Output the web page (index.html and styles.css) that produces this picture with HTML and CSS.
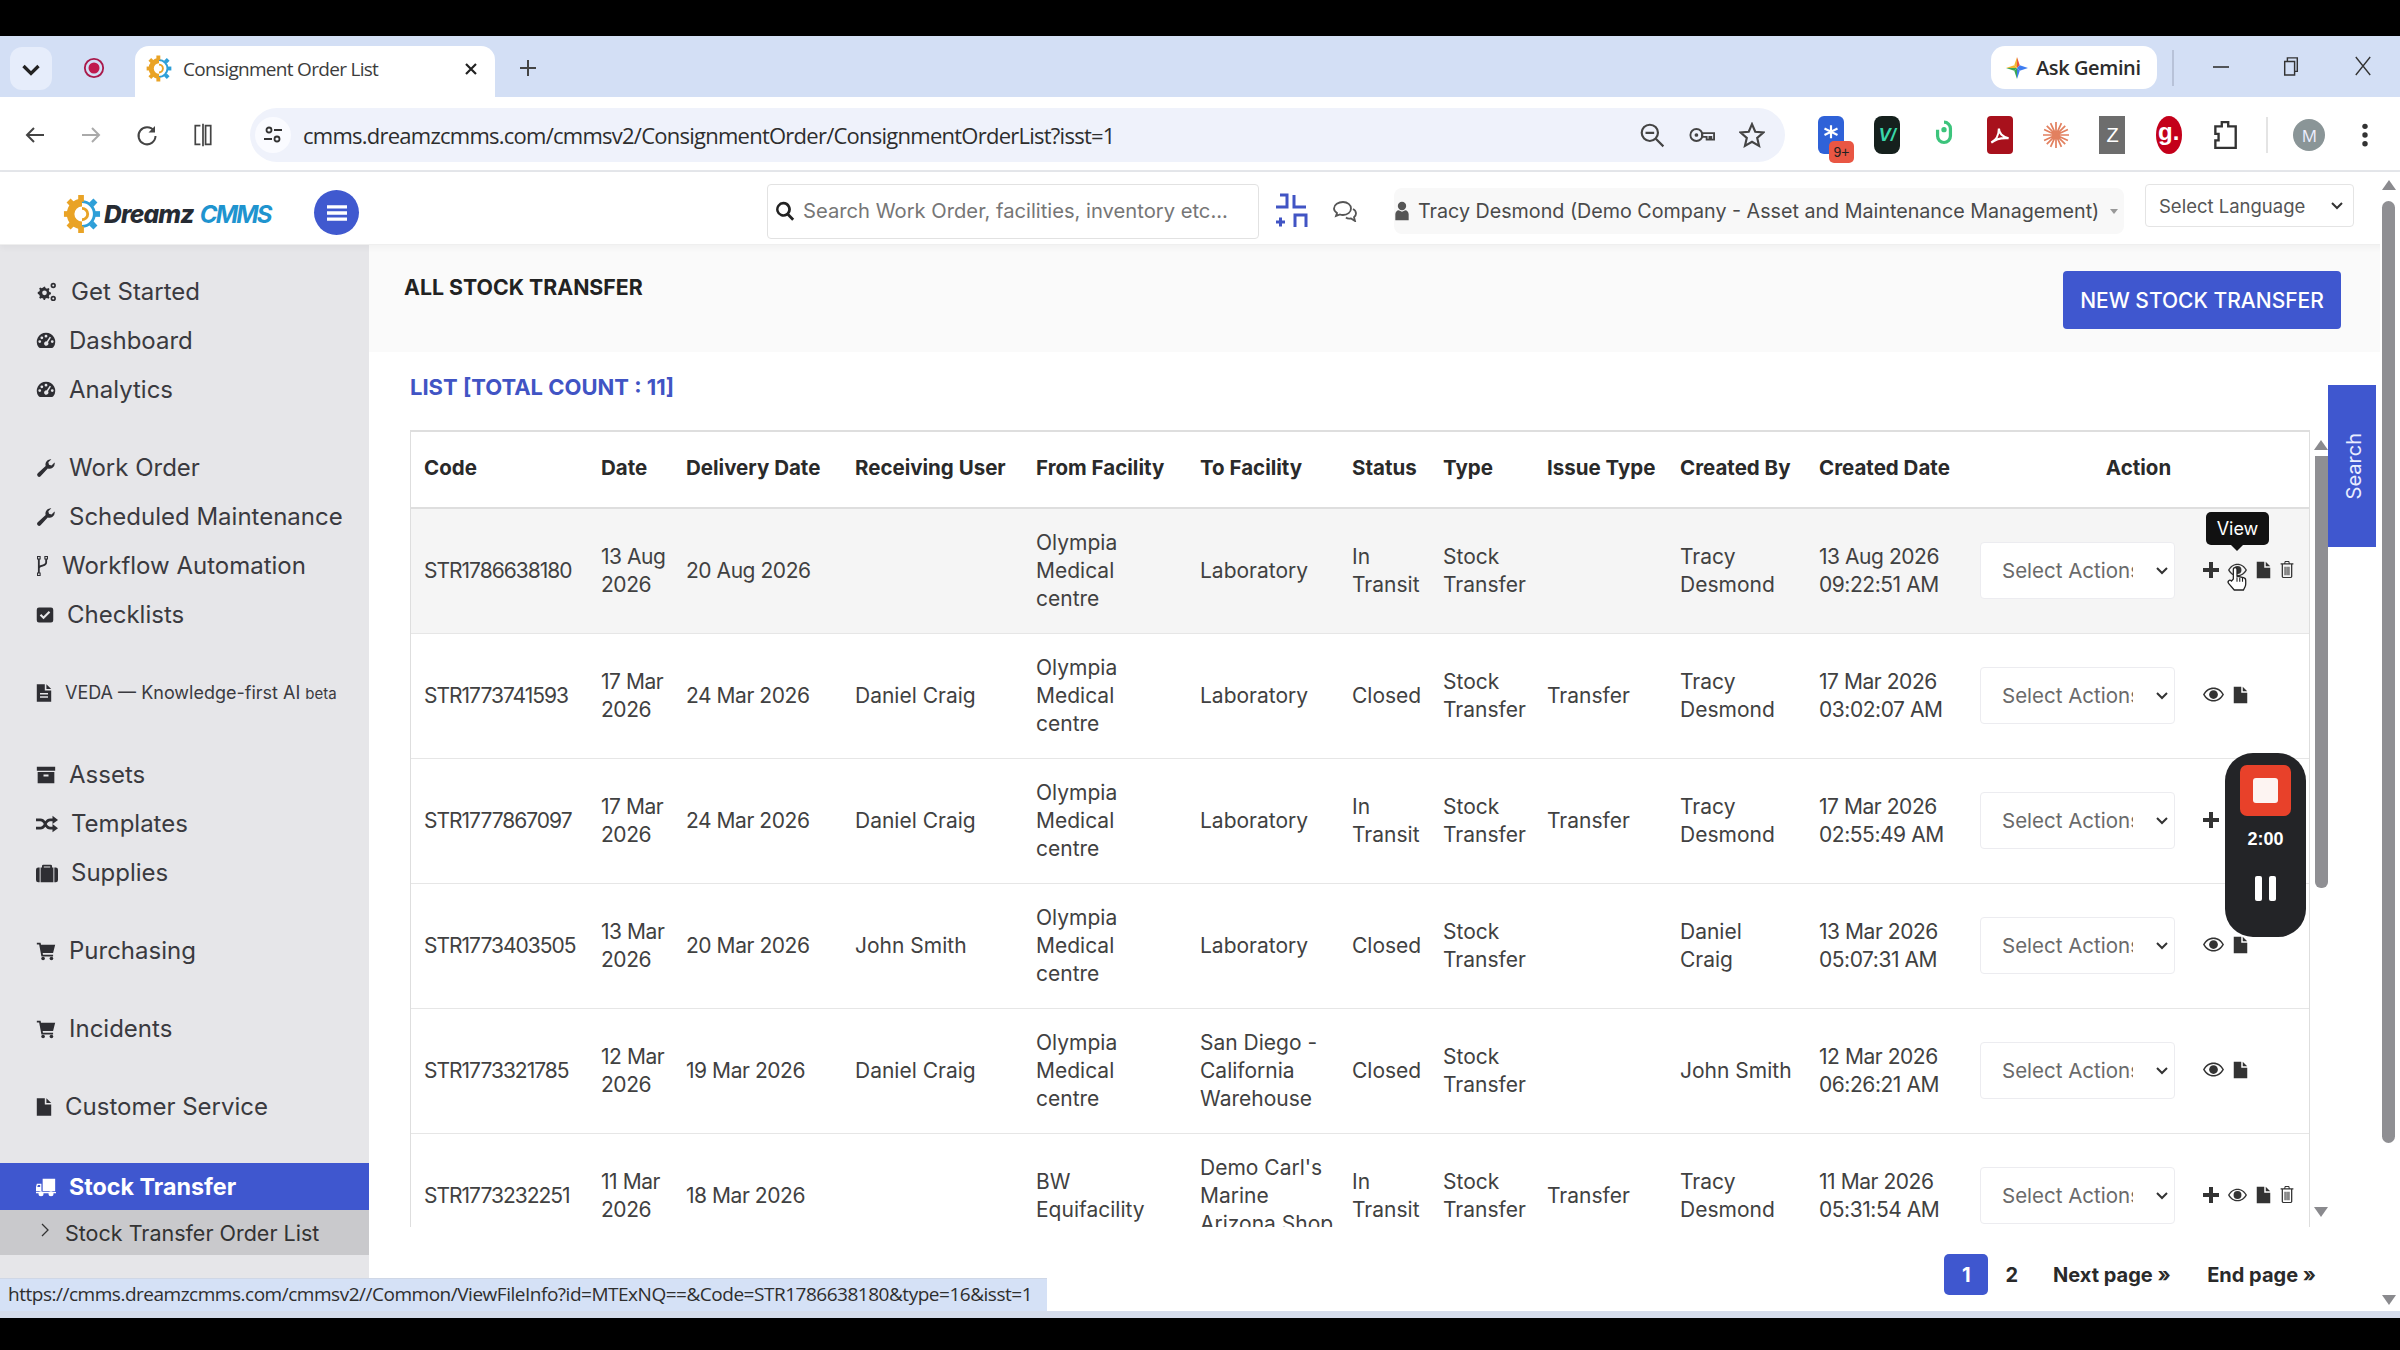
FILE: index.html
```html
<!DOCTYPE html>
<html lang="en">
<head>
<meta charset="utf-8">
<title>Consignment Order List</title>
<link rel="stylesheet" href="styles.css">
</head>
<body>
<svg class="defs" aria-hidden="true">
  <symbol id="i-gear" viewBox="0 0 40 40">
    <path d="M20 8a12 12 0 0 0 0 24" fill="none" stroke="#e9a326" stroke-width="8"/>
    <path d="M20 7a13 13 0 0 1 0 26" fill="none" stroke="#2e9fd8" stroke-width="3"/>
    <g fill="#e9a326"><rect x="16" y="0" width="6" height="7"/><rect x="16" y="33" width="6" height="7"/><rect x="1" y="17" width="6" height="6"/><rect x="5" y="5" width="6" height="6" transform="rotate(45 8 8)"/><rect x="5" y="29" width="6" height="6" transform="rotate(45 8 32)"/></g>
    <g fill="#2e9fd8"><rect x="33" y="17" width="6" height="6"/><rect x="29" y="5" width="6" height="6" transform="rotate(45 32 8)"/><rect x="29" y="29" width="6" height="6" transform="rotate(45 32 32)"/></g>
    <path d="M20 14a6 6 0 0 1 0 12" fill="none" stroke="#e9a326" stroke-width="3"/>
  </symbol>
  <symbol id="i-cogs" viewBox="0 0 24 24"><path fill-rule="evenodd" d="M8 6l1.600-.5.6 1.800 1.800.8 1.700-.9 1.300 1.300-.9 1.700.8 1.800 1.800.6v2l-1.800.6-.8 1.800.9 1.700-1.300 1.300-1.700-.9-1.800.8-.6 1.800H8l-.6-1.800-1.800-.8-1.700.9-1.300-1.300.9-1.700-.8-1.800L.9 14v-2l1.800-.6.8-1.800-.9-1.700 1.300-1.300 1.700.9 1.800-.8zM9 10.200a2.800 2.800 0 1 0 0 5.600 2.800 2.800 0 0 0 0-5.600z"/><path fill-rule="evenodd" d="M19.500 1a3.200 3.200 0 1 0 0 6.400 3.200 3.200 0 0 0 0-6.400zm0 2a1.200 1.200 0 1 1 0 2.400 1.200 1.200 0 0 1 0-2.400zM19.500 16.500a3.200 3.200 0 1 0 0 6.400 3.200 3.200 0 0 0 0-6.400zm0 2a1.200 1.200 0 1 1 0 2.400 1.200 1.200 0 0 1 0-2.400z"/></symbol>
  <symbol id="i-dash" viewBox="0 0 24 24"><path fill-rule="evenodd" d="M12 2a11 11 0 0 0-9 17.300c.5.700 1.200 1.200 2 1.200h14c.8 0 1.500-.5 2-1.200A11 11 0 0 0 12 2zM7 6.500a1.700 1.700 0 1 1 0 3.400 1.700 1.700 0 0 1 0-3.400zM12 4.500a1.700 1.700 0 1 1 0 3.400 1.700 1.700 0 0 1 0-3.400zM4.500 11a1.700 1.700 0 1 1 0 3.400 1.700 1.700 0 0 1 0-3.400zM19.500 11a1.700 1.700 0 1 1 0 3.400 1.700 1.700 0 0 1 0-3.400zM16.500 6.800l1.500.9-3.600 5.800a2.600 2.600 0 1 1-1.600-1z"/></symbol>
  <symbol id="i-wrench" viewBox="0 0 24 24"><path d="M22.500 6.500a6.300 6.300 0 0 1-8.400 6L5.500 21.800a2.400 2.400 0 0 1-3.400-3.400l9.500-8.700A6.300 6.300 0 0 1 18.400 1.600l-3.600 3.600.8 3 3 .8 3.600-3.600c.2.400.3.700.3 1.100z"/></symbol>
  <symbol id="i-fork" viewBox="0 0 14 24"><path fill-rule="evenodd" d="M1 1h4v4H4v6.500c.8-.5 2-.8 3.500-1.200 1.700-.5 2.500-1 2.500-2.300V5H9V1h4v4h-1v3c0 2.500-1.500 3.600-4 4.300-2 .6-3.500 1-4 2.200V19h1v4H1v-4h1V5H1zm1.200 1.200v1.600h1.600V2.200zm8 0v1.600h1.600V2.200zm-8 18v1.600h1.600v-1.600z"/></symbol>
  <symbol id="i-check" viewBox="0 0 24 24"><path fill-rule="evenodd" d="M4 2h16a3 3 0 0 1 3 3v14a3 3 0 0 1-3 3H4a3 3 0 0 1-3-3V5a3 3 0 0 1 3-3zm6 15.500l9-9-2-2-7 7-3-3-2 2z"/></symbol>
  <symbol id="i-file" viewBox="0 0 20 24"><path d="M1 1h10v8h8v14H1zM13 1l6 6h-6z"/></symbol>
  <symbol id="i-filetext" viewBox="0 0 20 24"><path fill-rule="evenodd" d="M1 1h10v8h8v14H1zM13 1l6 6h-6zM5 12v2h10v-2zM5 16v2h10v-2z"/></symbol>
  <symbol id="i-archive" viewBox="0 0 24 22"><path fill-rule="evenodd" d="M1 1h22v5H1zM2 7.500h20V21H2zm7 3v2.200h6v-2.200z"/></symbol>
  <symbol id="i-random" viewBox="0 0 24 20"><path d="M18 1l6 4.500-6 4.500V7h-2.500c-1.500 0-2.500 1-3.800 3 1.300 2 2.300 3 3.800 3H18v-3l6 4.500-6 4.500v-3h-2.500c-2.600 0-4.200-1.300-5.300-3-1.200 1.700-2.800 3-5.400 3H0v-3h4.800c1.500 0 2.500-1 3.700-3-1.200-2-2.200-3-3.700-3H0V4h4.800c2.600 0 4.200 1.300 5.400 3 1.100-1.700 2.700-3 5.300-3H18z"/></symbol>
  <symbol id="i-brief" viewBox="0 0 24 20"><path fill-rule="evenodd" d="M8 1h8a1.500 1.500 0 0 1 1.500 1.500V4H19v16H5V4h1.500V2.500A1.500 1.500 0 0 1 8 1zm.5 1.800V4h7V2.800zM0 6.500A2.500 2.500 0 0 1 2.500 4H4v16H2.500A2.500 2.500 0 0 1 0 17.500zM20 4h1.500A2.500 2.500 0 0 1 24 6.500v11a2.500 2.500 0 0 1-2.500 2.500H20z"/></symbol>
  <symbol id="i-cart" viewBox="0 0 24 24"><path d="M1 2h4.500l.5 2.500h17l-2.500 10H8l.4 2h12.100v2.200H6.500L3.800 4.200H1z"/><circle cx="8.500" cy="21" r="2.200"/><circle cx="18.500" cy="21" r="2.200"/></symbol>
  <symbol id="i-truck" viewBox="0 0 24 22"><path fill-rule="evenodd" d="M8 1h15v15H8zM1 7h5.500v9H0v-5zM2.300 8.500L1.500 11h3.500V8.500zM0 17h24v1.500H0z"/><circle cx="6" cy="19" r="3"/><circle cx="18" cy="19" r="3"/></symbol>
  <symbol id="i-user" viewBox="0 0 18 24"><circle cx="9" cy="6" r="5"/><path d="M1 23v-7c0-3 2-5 4-5l4 2 4-2c2 0 4 2 4 5v7z"/></symbol>
  <symbol id="i-search" viewBox="0 0 24 24"><path fill-rule="evenodd" d="M10 1a9 9 0 0 1 7.200 14.400l5.800 5.800-2.400 2.400-5.800-5.800A9 9 0 1 1 10 1zm0 3.200a5.800 5.800 0 1 0 0 11.600 5.800 5.800 0 0 0 0-11.600z"/></symbol>
  <symbol id="i-plus" viewBox="0 0 16 16"><path d="M6 0h4v6h6v4h-6v6H6v-6H0V6h6z"/></symbol>
  <symbol id="i-eye" viewBox="0 0 24 16"><path fill-rule="evenodd" d="M12 0C7 0 2.700 3 0 8c2.700 5 7 8 12 8s9.300-3 12-8c-2.700-5-7-8-12-8zm0 14.300c-4.300 0-7.900-2.400-10.100-6.300C4.100 4.100 7.700 1.700 12 1.700s7.900 2.400 10.100 6.300c-2.200 3.900-5.800 6.300-10.100 6.300z"/><circle cx="12" cy="8" r="5"/></symbol>
  <symbol id="i-trash" viewBox="0 0 18 24"><path fill-rule="evenodd" d="M6 0h6l1 3h5v2h-1.500v17a2 2 0 0 1-2 2h-11a2 2 0 0 1-2-2V5H0V3h5zm1 1.500L6.600 3h4.800L11 1.500zM3.300 5v17c0 .4.300.7.700.7h10c.4 0 .7-.3.700-.7V5zM5.500 8h1.500v12H5.500zM8.300 8h1.500v12H8.300zM11 8h1.500v12H11z"/></symbol>
</svg>

<div class="bar-black-top"></div>

<div class="tabstrip">
  <div class="tab-search"><svg class="ci" viewBox="0 0 16 16"><path d="M3 6l5 5 5-5" fill="none" stroke="#222" stroke-width="2.200"/></svg></div>
  <svg class="tab-rec" viewBox="0 0 24 24"><circle cx="12" cy="12" r="10" fill="none" stroke="#a9194a" stroke-width="2"/><circle cx="12" cy="12" r="6" fill="#c01a4d"/></svg>
  <div class="tab">
    <svg class="tab-fav"><use href="#i-gear"/></svg>
    <span class="tab-title">Consignment Order List</span>
    <svg class="tab-x" viewBox="0 0 14 14"><path d="M2 2l10 10M12 2L2 12" stroke="#222" stroke-width="2.200"/></svg>
  </div>
  <svg class="tab-new" viewBox="0 0 18 18"><path d="M9 1v16M1 9h16" stroke="#444" stroke-width="2"/></svg>
  <div class="tab-fill"></div>
  <div class="gemini">
    <svg class="gem-star" viewBox="0 0 24 24"><path d="M12 0l3 9-3 3z" fill="#e8553f"/><path d="M12 0L9 9l3 3z" fill="#f2b632"/><path d="M24 12l-9-3-3 3z" fill="#3f7df0"/><path d="M24 12l-9 3-3-3z" fill="#3f7df0"/><path d="M12 24l3-9-3-3z" fill="#3f7df0"/><path d="M12 24l-3-9 3-3z" fill="#3aa757"/><path d="M0 12l9-3 3 3z" fill="#f2b632"/><path d="M0 12l9 3 3-3z" fill="#3aa757"/></svg>
    <span>Ask Gemini</span>
  </div>
  <div class="strip-div"></div>
  <svg class="win win-min" viewBox="0 0 20 20"><path d="M2 10h16" stroke="#333" stroke-width="1.600"/></svg>
  <svg class="win win-res" viewBox="0 0 20 24"><path d="M3 7h11v15H3zM6 7V3h11v15h-3" fill="none" stroke="#333" stroke-width="1.600"/></svg>
  <svg class="win win-cls" viewBox="0 0 20 24"><path d="M2 2l16 20M18 2L2 22" stroke="#333" stroke-width="1.500"/></svg>
</div>

<div class="toolbar">
  <div class="nav-slot"><svg class="ci" viewBox="0 0 24 24"><path d="M21 12H4M11 5l-7 7 7 7" fill="none" stroke="#444" stroke-width="2"/></svg></div>
  <div class="nav-slot"><svg class="ci" viewBox="0 0 24 24"><path d="M3 12h17M13 5l7 7-7 7" fill="none" stroke="#aaa" stroke-width="2"/></svg></div>
  <div class="nav-slot"><svg class="ci" viewBox="0 0 24 24"><path d="M19 8a8.500 8.500 0 1 0 1.500 5" fill="none" stroke="#444" stroke-width="2"/><path d="M20 3v6.500h-6.500z" fill="#444"/></svg></div>
  <div class="nav-slot"><svg class="ci" viewBox="0 0 24 28"><path d="M9 3H3v22h6M15 3h6v22h-6zM12 1v26" fill="none" stroke="#444" stroke-width="2"/></svg></div>
  <div class="omni">
    <span class="omni-tune"><svg class="ci-sm" viewBox="0 0 20 20"><circle cx="6" cy="5" r="2.500" fill="none" stroke="#333" stroke-width="1.800"/><path d="M11 5h8M1 14h8" stroke="#333" stroke-width="1.800"/><circle cx="14" cy="14" r="2.500" fill="none" stroke="#333" stroke-width="1.800"/></svg></span>
    <span class="omni-url">cmms.dreamzcmms.com/cmmsv2/ConsignmentOrder/ConsignmentOrderList?isst=1</span>
    <svg class="omni-ic" viewBox="0 0 24 24"><circle cx="10" cy="10" r="7.500" fill="none" stroke="#444" stroke-width="2"/><path d="M6 10h8M15.500 15.500l7 7" stroke="#444" stroke-width="2"/></svg>
    <svg class="omni-ic" viewBox="0 0 28 20"><circle cx="8" cy="10" r="6.500" fill="none" stroke="#444" stroke-width="2"/><circle cx="8" cy="10" r="2" fill="#444"/><path d="M14 8h13v7h-3v-3h-2v3h-3v-3h-5z" fill="none" stroke="#444" stroke-width="2"/></svg>
    <svg class="omni-ic" viewBox="0 0 24 24"><path d="M12 2l3 7 7.500.700-5.700 5 1.700 7.300L12 18.200 5.500 22l1.700-7.300-5.700-5L9 9z" fill="none" stroke="#444" stroke-width="2"/></svg>
  </div>
  <div class="exts">
    <div class="ext ext-blue"><svg class="ext-svg" viewBox="0 0 24 24"><path d="M12 3v12M6 6l12 6M18 6L6 12" stroke="#fff" stroke-width="2"/></svg><span class="ext-badge">9+</span></div>
    <div class="ext ext-dark"><span class="ext-v">V/</span></div>
    <div class="ext"><svg class="ext-svg" viewBox="0 0 16 28"><path d="M8 2a6 6 0 0 1 6 6v7a6 6 0 0 1-12 0V9" fill="none" stroke="#3cc47c" stroke-width="3"/><circle cx="8" cy="9" r="2.500" fill="#3cc47c"/></svg></div>
    <div class="ext ext-red"><svg class="ext-svg" viewBox="0 0 24 24"><path d="M4 19c4-2 7-7 7-13 0 4 3 8 9 9-5-.500-11 0-16 4z" fill="none" stroke="#fff" stroke-width="2"/></svg></div>
    <div class="ext"><svg class="ext-svg" viewBox="0 0 24 24"><path d="M12 0v24M0 12h24M3.500 3.500l17 17M20.500 3.500l-17 17M7 1l10 22M17 1L7 23M1 7l22 10M23 7L1 17" stroke="#e2805f" stroke-width="1.600"/></svg></div>
    <div class="ext ext-z">Z</div>
    <div class="ext ext-g">g.</div>
    <div class="ext"><svg class="ext-svg" viewBox="0 0 24 28"><path d="M9 6V2h6v4h7v20H3v-7h3v-6H3V6z" fill="none" stroke="#333" stroke-width="2.200"/></svg></div>
  </div>
  <div class="tool-div"></div>
  <div class="avatar">M</div>
  <svg class="kebab" viewBox="0 0 6 24"><circle cx="3" cy="4" r="2.500"/><circle cx="3" cy="12" r="2.500"/><circle cx="3" cy="20" r="2.500"/></svg>
</div>

<div class="app">
  <header class="apphead">
    <div class="logo">
      <svg class="logo-gear"><use href="#i-gear"/></svg>
      <span class="logo-d">Dreamz</span><span class="logo-c">CMMS</span>
    </div>
    <button class="menu-btn"><svg class="menu-ic" viewBox="0 0 18 16"><path d="M0 1h18v3H0zM0 6.500h18v3H0zM0 12h18v3H0z" fill="#fff"/></svg></button>
    <div class="searchbox">
      <svg class="search-ic"><use href="#i-search"/></svg>
      <span class="search-ph">Search Work Order, facilities, inventory etc...</span>
    </div>
    <svg class="compress" viewBox="0 0 34 36"><path d="M2 14h11V2H6M20 2v12h12M2 29h9M6.500 24.500v9M21 34V22h11v12" fill="none" stroke="#4154c4" stroke-width="3"/></svg>
    <svg class="chat" viewBox="0 0 24 22"><path d="M10 2c4.500 0 8 2.800 8 6.500S14.500 15 10 15c-1 0-2-.100-3-.500L3 16l1-3c-1.800-1.200-3-2.800-3-4.500C1 4.800 5.500 2 10 2z" fill="none" stroke="#555" stroke-width="1.800"/><path d="M20 9c2 1 3 2.500 3 4.500 0 1.500-.800 2.800-2 3.700l1 3.800-4-2.500c-2 .3-4 0-5-1" fill="none" stroke="#555" stroke-width="1.800"/></svg>
    <div class="userpill">
      <svg class="user-ic"><use href="#i-user"/></svg>
      <span class="user-name">Tracy Desmond (Demo Company - Asset and Maintenance Management)</span>
      <span class="user-caret"></span>
    </div>
    <select class="langsel"><option>Select Language</option></select>
  </header>

  <div class="appbody">
    <nav class="sidebar">
      <div class="navgroup">
        <a class="navitem"><svg class="ni ni-22"><use href="#i-cogs"/></svg><span>Get Started</span></a>
        <a class="navitem"><svg class="ni ni-20"><use href="#i-dash"/></svg><span>Dashboard</span></a>
        <a class="navitem"><svg class="ni ni-20"><use href="#i-dash"/></svg><span>Analytics</span></a>
      </div>
      <div class="navgroup">
        <a class="navitem"><svg class="ni ni-20"><use href="#i-wrench"/></svg><span>Work Order</span></a>
        <a class="navitem"><svg class="ni ni-20"><use href="#i-wrench"/></svg><span>Scheduled Maintenance</span></a>
        <a class="navitem"><svg class="ni ni-13"><use href="#i-fork"/></svg><span>Workflow Automation</span></a>
        <a class="navitem"><svg class="ni ni-18"><use href="#i-check"/></svg><span>Checklists</span></a>
      </div>
      <div class="navgroup navgroup-wide">
        <a class="navitem navitem-small"><svg class="ni ni-16"><use href="#i-filetext"/></svg><span>VEDA — Knowledge-first AI <small class="beta">beta</small></span></a>
      </div>
      <div class="navgroup">
        <a class="navitem"><svg class="ni ni-20"><use href="#i-archive"/></svg><span>Assets</span></a>
        <a class="navitem"><svg class="ni ni-22"><use href="#i-random"/></svg><span>Templates</span></a>
        <a class="navitem"><svg class="ni ni-22"><use href="#i-brief"/></svg><span>Supplies</span></a>
      </div>
      <div class="navgroup">
        <a class="navitem"><svg class="ni ni-20"><use href="#i-cart"/></svg><span>Purchasing</span></a>
      </div>
      <div class="navgroup">
        <a class="navitem"><svg class="ni ni-20"><use href="#i-cart"/></svg><span>Incidents</span></a>
      </div>
      <div class="navgroup navgroup-last">
        <a class="navitem"><svg class="ni ni-16"><use href="#i-file"/></svg><span>Customer Service</span></a>
      </div>
      <div class="navactive"><svg class="ni ni-20 ni-white"><use href="#i-truck"/></svg><span>Stock Transfer</span></div>
      <div class="navsub"><svg class="sub-chev" viewBox="0 0 8 14"><path d="M1 1l6 6-6 6" fill="none" stroke="#333" stroke-width="1.300"/></svg><span>Stock Transfer Order List</span></div>
    </nav>

    <main class="main">
      <div class="mainhead">
        <h1 class="pagetitle">ALL STOCK TRANSFER</h1>
        <button class="btn-new">NEW STOCK TRANSFER</button>
      </div>
      <section class="listsec">
        <h2 class="listtitle">LIST [TOTAL COUNT : 11]</h2>
        <div class="tablearea">
          <div class="tablewrap">
            <table class="grid">
              <colgroup><col class="c1"><col class="c2"><col class="c3"><col class="c4"><col class="c5"><col class="c6"><col class="c7"><col class="c8"><col class="c9"><col class="c10"><col class="c11"><col class="c12"></colgroup>
              <thead><tr><th>Code</th><th>Date</th><th>Delivery Date</th><th>Receiving User</th><th>From Facility</th><th>To Facility</th><th>Status</th><th>Type</th><th>Issue Type</th><th>Created By</th><th>Created Date</th><th class="th-action">Action</th></tr></thead>
              <tbody>
                <tr class="row-hover"><td>STR1786638180</td><td>13 Aug<br>2026</td><td>20 Aug 2026</td><td></td><td>Olympia<br>Medical<br>centre</td><td>Laboratory</td><td>In<br>Transit</td><td>Stock<br>Transfer</td><td></td><td>Tracy<br>Desmond</td><td>13 Aug 2026<br>09:22:51 AM</td>
                  <td><div class="acts"><select class="actsel"><option>Select Actions</option></select><div class="acticons"><svg class="a-plus"><use href="#i-plus"/></svg><svg class="a-eye a-eye-sm"><use href="#i-eye"/></svg><svg class="a-file"><use href="#i-file"/></svg><svg class="a-trash"><use href="#i-trash"/></svg></div></div></td></tr>
                <tr><td>STR1773741593</td><td>17 Mar<br>2026</td><td>24 Mar 2026</td><td>Daniel Craig</td><td>Olympia<br>Medical<br>centre</td><td>Laboratory</td><td>Closed</td><td>Stock<br>Transfer</td><td>Transfer</td><td>Tracy<br>Desmond</td><td>17 Mar 2026<br>03:02:07 AM</td>
                  <td><div class="acts"><select class="actsel"><option>Select Actions</option></select><div class="acticons"><svg class="a-eye"><use href="#i-eye"/></svg><svg class="a-file"><use href="#i-file"/></svg></div></div></td></tr>
                <tr><td>STR1777867097</td><td>17 Mar<br>2026</td><td>24 Mar 2026</td><td>Daniel Craig</td><td>Olympia<br>Medical<br>centre</td><td>Laboratory</td><td>In<br>Transit</td><td>Stock<br>Transfer</td><td>Transfer</td><td>Tracy<br>Desmond</td><td>17 Mar 2026<br>02:55:49 AM</td>
                  <td><div class="acts"><select class="actsel"><option>Select Actions</option></select><div class="acticons"><svg class="a-plus"><use href="#i-plus"/></svg><svg class="a-eye a-eye-sm"><use href="#i-eye"/></svg><svg class="a-file"><use href="#i-file"/></svg><svg class="a-trash"><use href="#i-trash"/></svg></div></div></td></tr>
                <tr><td>STR1773403505</td><td>13 Mar<br>2026</td><td>20 Mar 2026</td><td>John Smith</td><td>Olympia<br>Medical<br>centre</td><td>Laboratory</td><td>Closed</td><td>Stock<br>Transfer</td><td></td><td>Daniel<br>Craig</td><td>13 Mar 2026<br>05:07:31 AM</td>
                  <td><div class="acts"><select class="actsel"><option>Select Actions</option></select><div class="acticons"><svg class="a-eye"><use href="#i-eye"/></svg><svg class="a-file"><use href="#i-file"/></svg></div></div></td></tr>
                <tr><td>STR1773321785</td><td>12 Mar<br>2026</td><td>19 Mar 2026</td><td>Daniel Craig</td><td>Olympia<br>Medical<br>centre</td><td>San Diego -<br>California<br>Warehouse</td><td>Closed</td><td>Stock<br>Transfer</td><td></td><td>John Smith</td><td>12 Mar 2026<br>06:26:21 AM</td>
                  <td><div class="acts"><select class="actsel"><option>Select Actions</option></select><div class="acticons"><svg class="a-eye"><use href="#i-eye"/></svg><svg class="a-file"><use href="#i-file"/></svg></div></div></td></tr>
                <tr><td>STR1773232251</td><td>11 Mar<br>2026</td><td>18 Mar 2026</td><td></td><td>BW<br>Equifacility</td><td>Demo Carl's<br>Marine<br>Arizona Shop</td><td>In<br>Transit</td><td>Stock<br>Transfer</td><td>Transfer</td><td>Tracy<br>Desmond</td><td>11 Mar 2026<br>05:31:54 AM</td>
                  <td><div class="acts"><select class="actsel"><option>Select Actions</option></select><div class="acticons"><svg class="a-plus"><use href="#i-plus"/></svg><svg class="a-eye a-eye-sm"><use href="#i-eye"/></svg><svg class="a-file"><use href="#i-file"/></svg><svg class="a-trash"><use href="#i-trash"/></svg></div></div></td></tr>
              </tbody>
            </table>
          </div>
          <div class="innerscroll">
            <span class="tri-up"></span>
            <span class="inner-thumb"></span>
            <span class="scroll-space"></span>
            <span class="tri-down"></span>
          </div>
        </div>
        <div class="pager">
          <span class="page-cur">1</span>
          <span class="page-num">2</span>
          <span class="page-next">Next page »</span>
          <span class="page-end">End page »</span>
        </div>
      </section>
      <div class="searchtab"><span>Search</span></div>
    </main>

    <div class="pagescroll">
      <span class="tri-up"></span>
      <span class="page-thumb"></span>
      <span class="scroll-space"></span>
      <span class="tri-down"></span>
    </div>
  </div>

  <div class="tooltip">View</div>
  <svg class="hand" viewBox="0 0 24 28"><path d="M8 14V3.500a2 2 0 0 1 4 0V11l7 1.500c1.500.3 2.500 1.500 2.500 3v4c0 1-.2 2-.7 3L19 26H9l-6-7c-1-1.200-.8-2.500 0-3.200s2-.5 3 .4z" fill="#fff" stroke="#222" stroke-width="1.400"/><path d="M12 12v5M15 12.500V17M18 13v4" stroke="#222" stroke-width="1.200"/></svg>

  <div class="recorder">
    <div class="rec-stop"><span class="rec-stop-in"></span></div>
    <div class="rec-time">2:00</div>
    <div class="rec-pause"><span></span><span></span></div>
  </div>

  <div class="statusurl">https://cmms.dreamzcmms.com/cmmsv2//Common/ViewFileInfo?id=MTExNQ==&amp;Code=STR1786638180&amp;type=16&amp;isst=1</div>
</div>
<div class="bottomline"></div>
</body>
</html>
```
FILE: styles.css
```css
* { box-sizing: border-box; }
html, body { margin: 0; padding: 0; }
body { width: 2400px; height: 1350px; overflow: hidden; background: #000; font-family: "Inter", "Liberation Sans", sans-serif; color: #3b3b3b; display: flex; flex-direction: column; }
.defs { width: 0; height: 0; position: absolute; }

.bar-black-top { height: 36px; background: #000; flex: none; }

/* browser tab strip */
.tabstrip { height: 61px; flex: none; background: #d3dff5; display: flex; align-items: flex-start; padding-right: 28px; font-family: "Open Sans", sans-serif; }
.tab-search { width: 42px; height: 43px; margin: 11px 0 0 10px; background: #e6edfb; border-radius: 12px; display: flex; align-items: center; justify-content: center; }
.ci { width: 24px; height: 24px; }
.ci-sm { width: 20px; height: 20px; }
.tab-rec { width: 22px; height: 24px; margin: 20px 0 0 31px; }
.tab { width: 360px; height: 51px; margin: 10px 0 0 30px; background: #fff; border-radius: 14px 14px 0 0; display: flex; align-items: center; padding: 0 17px 6px 11px; }
.tab-fav { width: 26px; height: 27px; flex: none; }
.tab-title { margin-left: 11px; font-size: 19px; color: #3c3c3c; flex: 1; letter-spacing: -.7px; }
.tab-x { width: 14px; height: 14px; }
.tab-new { width: 18px; height: 18px; margin: 23px 0 0 24px; }
.tab-fill { flex: 1; }
.gemini { width: 166px; height: 43px; margin-top: 10px; background: #fff; border-radius: 14px; display: flex; align-items: center; padding-left: 15px; gap: 8px; font-size: 20px; font-weight: 600; color: #2c2c2c; letter-spacing: -.4px; }
.gem-star { width: 22px; height: 32px; }
.strip-div { width: 2px; height: 36px; margin: 14px 0 0 15px; background: #b8c2d8; }
.win { flex: none; }
.win-min { width: 20px; height: 20px; margin: 21px 0 0 37px; }
.win-res { width: 18px; height: 24px; margin: 18px 0 0 51px; }
.win-cls { width: 18px; height: 24px; margin: 18px 0 0 54px; }

/* browser toolbar */
.toolbar { height: 75px; flex: none; background: #fff; border-bottom: 2px solid #e4e6ea; display: flex; align-items: center; padding: 3px 0 0 7px; font-family: "Open Sans", sans-serif; }
.nav-slot { width: 56px; display: flex; justify-content: center; flex: none; }
.omni { width: 1535px; height: 54px; margin-left: 19px; background: #eff2fb; border-radius: 27px; display: flex; align-items: center; padding-left: 3px; flex: none; }
.omni-tune { width: 36px; height: 36px; margin-left: 2px; border-radius: 50%; background: #fafbff; display: flex; align-items: center; justify-content: center; flex: none; }
.omni-url { margin-left: 12px; font-size: 22px; color: #2d2d2d; letter-spacing: -.75px; flex: 1; white-space: nowrap; }
.omni-ic { width: 26px; height: 26px; margin-right: 24px; flex: none; }
.omni-ic:last-child { margin-right: 20px; }
.exts { display: flex; margin-left: 33px; flex: none; }
.ext { width: 26px; height: 38px; margin-right: 30.300px; border-radius: 6px; position: relative; display: flex; align-items: center; justify-content: center; font-family: "Liberation Sans", sans-serif; font-weight: 700; color: #fff; flex: none; }
.ext-svg { width: 26px; height: 30px; }
.ext-blue { background: #2f62d8; }
.ext-dark { background: #15201d; border-radius: 8px; }
.ext-v { color: #39d6a8; font-style: italic; font-size: 18px; }
.ext-red { background: #a8111c; border-radius: 4px; }
.ext-z { background: #6d6d6d; border-radius: 0; font-size: 20px; font-weight: 400; }
.ext-g { background: #c4001a; border-radius: 50%; font-size: 24px; padding-bottom: 6px; }
.ext-badge { position: absolute; right: -10px; bottom: -9px; width: 25px; height: 22px; background: #e95643; border-radius: 5px; color: #222; font-size: 14px; font-weight: 400; line-height: 22px; text-align: center; }
.tool-div { width: 2px; height: 36px; margin-left: -2px; background: #e4e4e4; flex: none; }
.avatar { width: 32px; height: 32px; margin-left: 25px; border-radius: 50%; background: #8a9597; color: #eef; font-size: 17px; display: flex; align-items: center; justify-content: center; flex: none; }
.kebab { width: 8px; height: 26px; margin-left: 36px; fill: #333; flex: none; }

/* application */
.app { height: 1139px; flex: none; background: #fff; position: relative; display: flex; flex-direction: column; }
.apphead { height: 73px; flex: none; background: #fff; border-bottom: 1px solid #efefef; box-shadow: 0 3px 6px rgba(0,0,0,.04); display: flex; align-items: flex-start; position: relative; z-index: 2; }
.logo { width: 250px; height: 40px; margin: 22px 0 0 63px; display: flex; align-items: center; flex: none; font-style: italic; font-weight: 800; }
.logo-gear { width: 38px; height: 40px; flex: none; }
.logo-d { margin-left: 3px; font-size: 24.500px; color: #262b33; letter-spacing: -.8px; }
.logo-c { margin-left: 6px; font-size: 24px; color: #1f94cf; letter-spacing: -1.800px; font-weight: 700; }
.menu-btn { width: 45px; height: 45px; margin: 18px 0 0 1px; border: 0; border-radius: 50%; background: #4059cf; display: flex; align-items: center; justify-content: center; padding: 0; flex: none; }
.menu-ic { width: 20px; height: 18px; }
.searchbox { width: 492px; height: 55px; margin: 12px 0 0 408px; border: 1px solid #e2e2e2; border-radius: 4px; background: #fff; display: flex; align-items: center; padding: 0 0 2px 7px; flex: none; }
.search-ic { width: 20px; height: 20px; fill: #222; flex: none; }
.search-ph { margin-left: 8px; font-size: 20.200px; color: #767676; white-space: nowrap; }
.compress { width: 34px; height: 36px; margin: 21px 0 0 15px; flex: none; }
.chat { width: 24px; height: 22px; margin: 28px 0 0 25px; flex: none; }
.userpill { height: 46px; margin: 16px 0 0 37px; display: flex; align-items: center; background: #f8f8f8; border-radius: 8px; flex: none; width: 730px; }
.user-ic { width: 16px; height: 20px; fill: #555; flex: none; }
.user-name { margin-left: 8px; font-size: 19.700px; color: #4a4a4a; white-space: nowrap; width: 680px; flex: none; }
.user-caret { margin-left: 12px; border: 4px solid transparent; border-top: 5px solid #999; border-bottom: 0; }
.langsel { width: 209px; height: 43px; margin: 12px 0 0 21px; border: 1px solid #e4e4e4; border-radius: 4px; font-family: "Inter", sans-serif; font-size: 18.500px; color: #555; padding: 0 30px 0 13px; flex: none; appearance: none; background: #fff url("data:image/svg+xml,%3Csvg xmlns='http://www.w3.org/2000/svg' viewBox='0 0 12 8'%3E%3Cpath d='M1 1l5 5 5-5' fill='none' stroke='%23333' stroke-width='2'/%3E%3C/svg%3E") no-repeat right 10px center / 12px 8px; }

.appbody { flex: 1; display: flex; min-height: 0; }
.sidebar { width: 369px; flex: none; background: #e6e6e9; padding-top: 22px; display: flex; flex-direction: column; }
.navgroup { margin-bottom: 29px; padding-left: 36px; }
.navgroup-wide { margin-bottom: 33px; }
.navgroup-last { margin-bottom: 32px; }
.navitem { height: 49px; display: flex; align-items: center; gap: 13px; font-size: 24px; color: #3a3a3f; white-space: nowrap; }
.navitem-small { font-size: 18px; }
.beta { font-size: 15px; }
.ni { flex: none; fill: #2e2e33; height: 22px; }
.ni-13 { width: 13px; }
.ni-16 { width: 16px; }
.ni-18 { width: 18px; height: 18px; }
.ni-20 { width: 20px; height: 20px; }
.ni-22 { width: 22px; height: 20px; }
.ni-white { fill: #fff; }
.navactive { height: 47px; background: #3f57cf; padding-left: 36px; display: flex; align-items: center; gap: 13px; color: #fff; font-size: 23.300px; font-weight: 700; flex: none; }
.navsub { height: 45px; background: #c9c9cc; padding-left: 41px; display: flex; align-items: center; font-size: 21.500px; color: #333; flex: none; }
.sub-chev { width: 8px; height: 14px; margin: -6px 16px 0 0; flex: none; }

.main { width: 2011px; flex: none; display: flex; flex-direction: column; position: relative; min-width: 0; }
.mainhead { height: 107px; flex: none; background: #fafafa; display: flex; justify-content: space-between; align-items: flex-start; padding: 26px 39px 0 35px; }
.pagetitle { margin: 0; font-size: 21.300px; font-weight: 700; color: #222; line-height: 32px; }
.btn-new { width: 278px; height: 58px; border: 0; border-radius: 4px; background: #3f57cf; color: #fff; font-family: "Inter", sans-serif; font-size: 21px; font-weight: 500; padding: 0; white-space: nowrap; }
.listsec { flex: 1; padding: 20px 0 0 41px; }
.listtitle { margin: 0 0 27px; height: 31px; font-size: 22px; line-height: 31px; font-weight: 700; color: #4154c4; }
.tablearea { height: 797px; display: flex; }
.tablewrap { width: 1900px; height: 797px; overflow: hidden; border-left: 1px solid #dedede; border-right: 1px solid #dedede; border-top: 2px solid #dedede; flex: none; }
.grid { width: 1898px; border-collapse: collapse; table-layout: fixed; font-size: 21px; line-height: 28px; color: #414141; }
.c1 { width: 177px; } .c2 { width: 85px; } .c3 { width: 169px; } .c4 { width: 181px; } .c5 { width: 164px; } .c6 { width: 152px; }
.c7 { width: 91px; } .c8 { width: 104px; } .c9 { width: 133px; } .c10 { width: 139px; } .c11 { width: 162px; } .c12 { width: 341px; }
.grid th { height: 76px; padding: 0 0 3px 13px; text-align: left; font-size: 20.500px; font-weight: 700; color: #2a2a2a; white-space: nowrap; border-bottom: 2px solid #dedede; }
.grid th.th-action { text-align: center; padding: 0 0 3px 0; }
.grid td { height: 125px; padding: 0 0 0 13px; border-bottom: 1px solid #e6e6e6; white-space: nowrap; }
.grid td:first-child { letter-spacing: -1px; }
.grid td:nth-child(2), .grid td:nth-child(3), .grid td:nth-child(11) { letter-spacing: -.45px; }
.row-hover { background: #f5f5f5; }
.acts { display: flex; align-items: center; margin-left: -1px; }
.actsel { width: 195px; height: 57px; border: 1px solid #ececf0; border-radius: 4px; font-family: "Inter", sans-serif; font-size: 20.500px; color: #6a6a6a; padding: 0 41px 0 21px; flex: none; appearance: none; background: #fff url("data:image/svg+xml,%3Csvg xmlns='http://www.w3.org/2000/svg' viewBox='0 0 12 8'%3E%3Cpath d='M1 1l5 5 5-5' fill='none' stroke='%23333' stroke-width='2'/%3E%3C/svg%3E") no-repeat right 6px center / 12px 8px; }
.acticons { display: flex; align-items: center; gap: 9px; margin: -2px 0 0 28px; }
.acticons svg { fill: #333; flex: none; }
.a-plus { width: 16px; height: 16px; }
.a-eye { width: 21px; height: 15px; }
.a-eye-sm { width: 19px; height: 14px; }
.a-file { width: 15px; height: 20px; }
.a-trash { width: 14px; height: 17px; }

.innerscroll { width: 20px; height: 797px; margin-left: 1px; flex: none; display: flex; flex-direction: column; align-items: center; padding: 10px 0 10px 0; }
.tri-up { width: 0; height: 0; border: 7px solid transparent; border-bottom: 10px solid #8a8a8e; border-top: 0; flex: none; }
.tri-down { width: 0; height: 0; border: 7px solid transparent; border-top: 10px solid #8a8a8e; border-bottom: 0; flex: none; }
.inner-thumb { width: 13px; height: 432px; margin-top: 6px; background: #8f8f93; border-radius: 0 0 6px 6px; flex: none; }
.scroll-space { flex: 1; }

.pager { margin: 27px 64px 0 0; height: 41px; display: flex; justify-content: flex-end; align-items: center; font-size: 20px; font-weight: 700; color: #2a2a2a; }
.page-cur { width: 44px; height: 41px; background: #3f57cf; color: #fff; border-radius: 5px; display: flex; align-items: center; justify-content: center; }
.page-num { margin-left: 17px; }
.page-next { margin-left: 35px; }
.page-end { margin-left: 36.500px; }

.searchtab { position: absolute; left: 1959px; top: 140px; width: 48px; height: 162px; background: #3f57cf; display: flex; align-items: center; justify-content: center; padding-left: 3px; color: #e9edff; font-size: 20px; }
.searchtab span { writing-mode: vertical-rl; transform: rotate(180deg); }

.pagescroll { width: 20px; flex: none; background: #fff; display: flex; flex-direction: column; align-items: center; padding: 0 3px 6px 0; margin-top: -73px; position: relative; z-index: 3; }
.pagescroll .tri-up { margin-top: 8px; }
.page-thumb { width: 13px; height: 942px; margin-top: 11px; background: #8f8f93; border-radius: 7px; flex: none; }

/* overlays */
.tooltip { position: absolute; left: 2206px; top: 340px; width: 63px; height: 33px; background: #111; color: #fff; border-radius: 5px; font-size: 18px; line-height: 33px; text-align: center; z-index: 5; }
.tooltip::after { content: ""; position: absolute; left: 25px; top: 33px; border: 6px solid transparent; border-top-color: #111; border-bottom: 0; }
.hand { position: absolute; left: 2226px; top: 392px; width: 22px; height: 30px; z-index: 6; }
.recorder { position: absolute; left: 2225px; top: 581px; width: 81px; height: 184px; background: #232427; border-radius: 28px; z-index: 6; display: flex; flex-direction: column; align-items: center; padding-top: 12px; }
.rec-stop { width: 51px; height: 51px; background: #e8412a; border-radius: 7px; display: flex; align-items: center; justify-content: center; }
.rec-stop-in { width: 25px; height: 25px; background: #fdf4f2; border-radius: 3px; }
.rec-time { margin-top: 12px; color: #fff; font-family: "Liberation Sans", sans-serif; font-weight: 700; font-size: 18px; line-height: 22px; }
.rec-pause { margin-top: 26px; display: flex; gap: 7px; }
.rec-pause span { width: 7px; height: 25px; background: #fff; border-radius: 2px; }
.statusurl { position: absolute; left: 0; bottom: 0; width: 1047px; height: 33px; background: #d5e1f6; border-top: 1px solid #cfd7e6; font-family: "Open Sans", sans-serif; font-size: 19px; line-height: 31px; letter-spacing: -.48px; color: #2e2e2e; padding-left: 8px; white-space: nowrap; z-index: 7; }
.bottomline { height: 7px; flex: none; background: #d5dceb; }
```
